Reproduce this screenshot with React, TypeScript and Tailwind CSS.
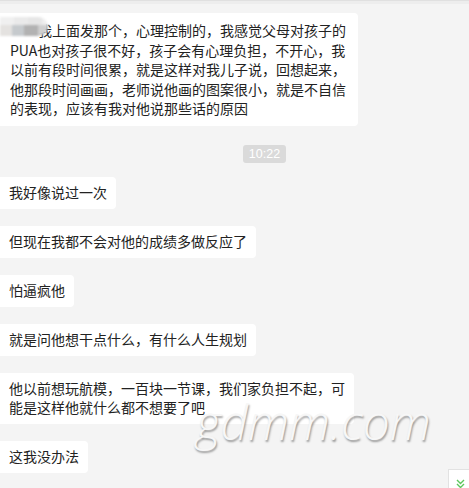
import React from "react";

const font = { fontFamily: '"Noto Sans CJK SC", "Noto Sans", sans-serif' };

function Bubble({ lines, className = "" }: { lines: string[]; className?: string }) {
  return (
    <div
      className={`w-fit bg-white rounded-r-[4px] pl-[9px] pr-[9px] pt-[6px] pb-[7px] text-[14px] leading-[19px] text-[#222] ${className}`}
    >
      {lines.map((l, i) => (
        <div key={i} className="whitespace-nowrap">
          {l}
        </div>
      ))}
    </div>
  );
}

export default function App() {
  return (
    <div className="relative w-[469px] h-[488px] overflow-hidden bg-[#f4f4f4]" style={font}>
      <div className="h-[1px] bg-[#e0e0e0]" />
      <div className="h-[3px] bg-[#ededed]" />
      <div className="flex flex-col pt-[9px]">
        <div className="relative w-[358px] bg-white rounded-r-[4px] pl-[10px] pr-[9px] pt-[8px] pb-[7px] text-[14px] leading-[19.5px] text-[#222]">
          <div className="whitespace-nowrap">
            <span className="text-transparent">你说</span>我上面发那个，心理控制的，我感觉父母对孩子的
          </div>
          <div className="whitespace-nowrap">PUA也对孩子很不好，孩子会有心理负担，不开心，我</div>
          <div className="whitespace-nowrap">以前有段时间很累，就是这样对我儿子说，回想起来，</div>
          <div className="whitespace-nowrap">他那段时间画画，老师说他画的图案很小，就是不自信</div>
          <div className="whitespace-nowrap">的表现，应该有我对他说那些话的原因</div>
          <div className="absolute left-0 top-[4px] w-[48px] h-[19px] flex flex-col overflow-hidden rounded-r-[10px] blur-[1px]">
            <div className="flex h-[8px]">
              <div className="w-[14px] bg-[#f0f0f0]" />
              <div className="w-[14px] bg-[#eaeaea]" />
              <div className="w-[14px] bg-[#e6e6e6]" />
              <div className="w-[6px] bg-[#eeeeee]" />
            </div>
            <div className="flex flex-1">
              <div className="w-[12px] bg-[#e4e2e0]" />
              <div className="w-[12px] bg-[#c6cacd]" />
              <div className="w-[14px] bg-[#b2b2b2]" />
              <div className="w-[10px] bg-[#cfcfcf]" />
            </div>
          </div>
        </div>

        <div
          className="ml-[243px] mt-[19px] w-[43px] h-[18px] rounded-[3px] bg-[#dadada] text-white text-[12.5px] leading-[18px] text-center"
          style={{ fontFamily: '"Liberation Sans", Arial, sans-serif' }}
        >
          10:22
        </div>

        <Bubble className="mt-[14px]" lines={["我好像说过一次"]} />
        <Bubble className="mt-[17px]" lines={["但现在我都不会对他的成绩多做反应了"]} />
        <Bubble className="mt-[17px]" lines={["怕逼疯他"]} />
        <Bubble className="mt-[17px]" lines={["就是问他想干点什么，有什么人生规划"]} />
        <Bubble
          className="mt-[17px]"
          lines={["他以前想玩航模，一百块一节课，我们家负担不起，可", "能是这样他就什么都不想要了吧"]}
        />
        <Bubble className="mt-[17px]" lines={["这我没办法"]} />
      </div>

      <div
        className="absolute left-[196px] top-[398px] text-[48px] leading-none italic font-light text-[#f7f7f7] [text-shadow:1px_2px_2px_rgba(0,0,0,0.38)] whitespace-nowrap pointer-events-none"
        style={{ fontFamily: '"Open Sans", sans-serif' }}
      >
        gdmm.com
      </div>

      <div className="absolute left-[448px] top-[469px] w-[24px] h-[24px] bg-white border-l border-t border-[#e2e2e2] flex justify-center pt-[9px]">
        <svg width="9" height="10" viewBox="0 0 9 10" fill="none" stroke="#5cc85c" strokeWidth="1.4">
          <path d="M1 1 L4.5 4.5 L8 1" />
          <path d="M1 5 L4.5 8.5 L8 5" />
        </svg>
      </div>
    </div>
  );
}
